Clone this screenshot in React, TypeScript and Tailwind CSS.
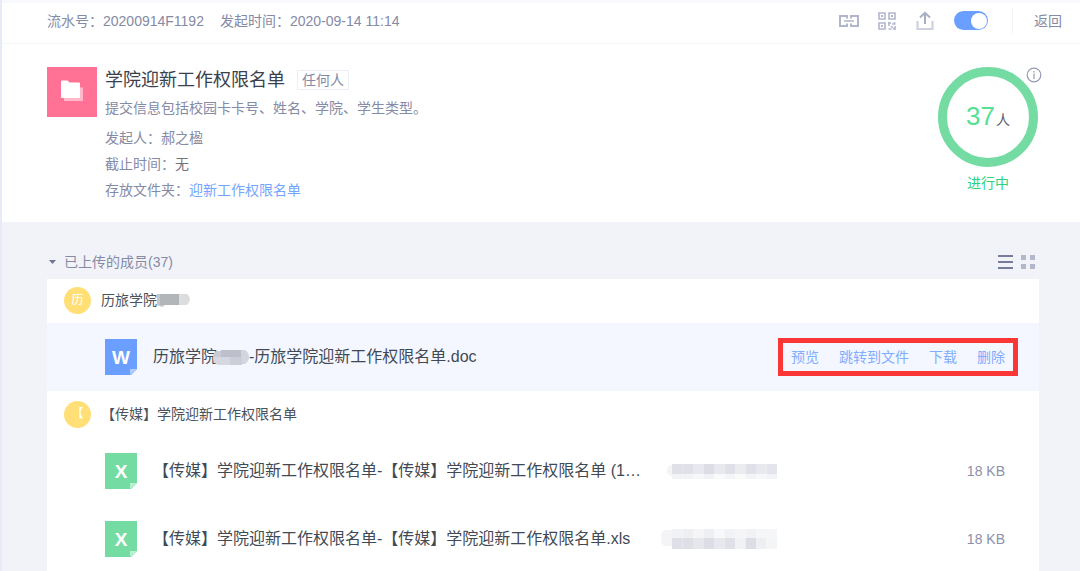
import { useState } from 'react';

type FileKind = 'word' | 'excel';

interface UploadedFile {
  kind: FileKind;
  name: string;
  size?: string;
  active?: boolean;
}

interface Member {
  initial: string;
  name: string;
  masked?: boolean;
  files: UploadedFile[];
}

const MEMBERS: Member[] = [
  {
    initial: '历',
    name: '历旅学院',
    masked: true,
    files: [{ kind: 'word', name: '-历旅学院迎新工作权限名单.doc', active: true }],
  },
  {
    initial: '【',
    name: '【传媒】学院迎新工作权限名单',
    files: [
      {
        kind: 'excel',
        name: '【传媒】学院迎新工作权限名单-【传媒】学院迎新工作权限名单 (1).xls',
        size: '18 KB',
      },
      {
        kind: 'excel',
        name: '【传媒】学院迎新工作权限名单-【传媒】学院迎新工作权限名单.xls',
        size: '18 KB',
      },
    ],
  },
];

const FILE_ACTIONS = ['预览', '跳转到文件', '下载', '删除'];

function LinkIcon() {
  return (
    <svg width="22" height="14" viewBox="0 0 22 14" fill="none" stroke="#b1b6cc" strokeWidth="2">
      <path d="M9 4.500V2H2v10h7V9.500M13 4.500V2h7v10h-7V9.500" />
      <path d="M6 7h10" strokeWidth="1.600" />
    </svg>
  );
}

function QrIcon() {
  return (
    <svg width="18" height="18" viewBox="0 0 18 18" fill="none" stroke="#b1b6cc" strokeWidth="1.6">
      <path d="M1 1h6v6H1zM11 1h6v6h-6zM1 11h6v6H1z" />
      <path d="M3 3h2v2H3zM13 3h2v2h-2zM3 13h2v2H3z" fill="#b1b6cc" stroke="none" />
      <path d="M11 10v4M10 11h3M14 12h3.500M16.500 10v2M13 14l2 2M10.500 17h3M17 14v4M15 17h2" />
    </svg>
  );
}

function ShareIcon() {
  return (
    <svg width="18" height="20" viewBox="0 0 18 20" fill="none">
      <path d="M1.500 10v8h15v-8" stroke="#ced2e0" strokeWidth="2.200" />
      <path d="M9 13V2M4 6.500L9 1.800l5 4.700" stroke="#a9aec5" strokeWidth="2" />
    </svg>
  );
}

function FolderLogo() {
  return (
    <svg className="shrink-0" width="50" height="50" viewBox="0 0 50 50">
      <path d="M0 0h50v50H0z" fill="#ff7295" />
      <path d="M17 20.500h19V34H17z" fill="#ffb9ca" />
      <path d="M14 14.500q0-1 1-1h5.500l2 2H32q1 0 1 1V30q0 1-1 1H15q-1 0-1-1z" fill="#fff" />
    </svg>
  );
}

function FileIcon({ kind }: { kind: FileKind }) {
  const word = kind === 'word';
  return (
    <svg className="shrink-0" width="32" height="36" viewBox="0 0 32 36">
      <path d="M0 0h32v30l-6 6H0z" fill={word ? '#6b9fff' : '#74dca3'} />
      <path d="M25 30h7l-7 6z" fill={word ? '#b0ccff' : '#b5f2cf'} />
      <text
        x="16"
        y="25"
        textAnchor="middle"
        fill="#fff"
        fontSize="19"
        fontWeight="700"
        fontFamily="Liberation Sans, sans-serif"
      >
        {word ? 'W' : 'X'}
      </text>
    </svg>
  );
}

function NameMask() {
  return (
    <svg className="shrink-0" width="33" height="14" viewBox="0 0 33 14">
      <path d="M0 1h11v11H8l-3 2-5-2z" fill="#c4c7c9" />
      <path d="M3 1h19v11H3z" fill="#b3b6b9" />
      <path d="M22 1h8q3 2 3 5t-3 6h-8z" fill="#dbdddf" />
    </svg>
  );
}

function FileNameMask() {
  return (
    <svg className="-ml-1 shrink-0" width="36" height="18" viewBox="0 0 36 18">
      <path d="M3 3h14v6H0q0-4 3-6z" fill="#c9ccd5" />
      <path d="M8 2h20v8H8z" fill="#bdc0ca" />
      <path d="M28 2h4q4 3 4 7t-4 7h-4z" fill="#d3d5de" />
      <path d="M0 9h18v8H5q-5-2-5-8z" fill="#d5d8e1" />
      <path d="M17 9h12v8H17z" fill="#cbced8" />
    </svg>
  );
}

const TIME_MASKS = [
  {
    top: ['#e0e1e8', '#e0e1e8', '#e8e9ee', '#dcdde5', '#e8e9ee', '#e0e1e8', '#ebecf0', '#e0e1e8', '#e8e9ee', '#e4e5ec'],
    bottom: ['#f2f3f6', '#f2f3f6', '#f7f7f9', '#f0f1f4', '#fafafb', '#f4f5f7', '#fafafb', '#f2f3f6', '#f7f7f9', '#f2f3f6'],
    topHeight: 10,
    bottomHeight: 5,
  },
  {
    top: ['#f1f2f5', '#eeeff3', '#f5f5f8', '#eeeff3', '#f7f8fa', '#f1f2f5', '#f5f5f8', '#f1f2f5', '#f5f6f8', '#f6f6f8'],
    bottom: ['#dfe0e7', '#dfe0e7', '#e6e7ec', '#dcdde5', '#e8e9ee', '#e0e1e8', '#f1f2f5', '#dcdde5', '#eeeff3', '#f4f5f7'],
    topHeight: 9,
    bottomHeight: 11,
  },
];

function TimeMask({ index }: { index: number }) {
  const mask = TIME_MASKS[index % TIME_MASKS.length];
  const height = mask.topHeight + mask.bottomHeight;
  return (
    <svg width="116" height={height} viewBox={`0 0 116 ${height}`}>
      <rect x={index ? 0 : 6} y="1" width="20" height={height - 4} rx="5" fill="#f4f4f7" />
      {mask.top.map((fill, i) => (
        <rect key={i} x={11 + i * 10.5} width="10.5" height={mask.topHeight} fill={fill} />
      ))}
      {mask.bottom.map((fill, i) => (
        <rect key={i} x={11 + i * 10.5} y={mask.topHeight} width="10.5" height={mask.bottomHeight} fill={fill} />
      ))}
    </svg>
  );
}

function FileRow({ file, index }: { file: UploadedFile; index: number }) {
  return (
    <li className={`flex h-17 items-center pr-[34px] pl-[58px] ${file.active ? 'bg-[#f4f7ff]' : ''}`}>
      <FileIcon kind={file.kind} />
      {file.active ? (
        <>
          <div className="ml-4 flex items-center text-base text-[#414a54]">
            <span>历旅学院</span>
            <FileNameMask />
            <span>{file.name}</span>
          </div>
          <div className="-mr-[13px] ml-auto flex items-center gap-5 border-[5px] border-[#fb3636] px-2 py-1 text-sm text-[#80adff]">
            {FILE_ACTIONS.map((action) => (
              <button key={action} type="button" className="leading-5">
                {action}
              </button>
            ))}
          </div>
        </>
      ) : (
        <>
          <p className="ml-4 min-w-0 flex-1 truncate text-base text-[#414a54]">{file.name}</p>
          <div className="ml-4 w-[116px] shrink-0">
            <TimeMask index={index} />
          </div>
          <span className="w-[228px] shrink-0 text-right text-sm text-[#8c90aa]">{file.size}</span>
        </>
      )}
    </li>
  );
}

export default function App() {
  const [collecting, setCollecting] = useState(true);
  const [expanded, setExpanded] = useState(true);

  return (
    <div className="min-h-screen border-l-2 border-[#e6ebf6] bg-[#f2f3f9] font-['Liberation_Sans','Noto_Sans_CJK_SC',sans-serif] text-sm text-[#858aa5]">
      {/* Top bar */}
      <header className="flex h-11 items-center border-b border-[#f5f6f9] bg-white pr-[18px] pb-0.5 pl-[45px] shadow-[inset_0_3px_0_#f7f9fc]">
        <span>流水号：20200914F1192</span>
        <span className="ml-4">发起时间：2020-09-14 11:14</span>
        <div className="ml-auto flex items-center">
          <button type="button" aria-label="复制链接">
            <LinkIcon />
          </button>
          <button type="button" aria-label="二维码" className="ml-[18px]">
            <QrIcon />
          </button>
          <button type="button" aria-label="分享" className="ml-5">
            <ShareIcon />
          </button>
          <input
            type="checkbox"
            role="switch"
            aria-label="收集状态"
            checked={collecting}
            onChange={(e) => setCollecting(e.target.checked)}
            className="ml-5 flex h-[19px] w-[34px] cursor-pointer appearance-none items-center rounded-full bg-[#c8cddb] px-px before:size-4 before:rounded-full before:bg-white checked:justify-end checked:bg-[#6b9fff]"
          />
          <span className="ml-6 h-[26px] w-px bg-[#f3f4f8]" />
          <button type="button" className="ml-[21px]">
            返回
          </button>
        </div>
      </header>

      {/* Collection summary */}
      <section className="flex items-start bg-white pt-[23px] pr-[42px] pb-[22px] pl-[45px]">
        <FolderLogo />
        <div className="ml-2 min-w-0 flex-1">
          <div className="flex h-[26px] items-center gap-3">
            <h1 className="text-lg text-[#39424c]">学院迎新工作权限名单</h1>
            <span className="border border-[#eceef7] px-1 leading-[18px]">任何人</span>
          </div>
          <p className="mt-[5px] leading-5">提交信息包括校园卡卡号、姓名、学院、学生类型。</p>
          <div className="mt-[10px] flex flex-col gap-[6px] leading-5">
            <p>发起人：郝之楹</p>
            <p>
              截止时间：<span className="text-[#70747c]">无</span>
            </p>
            <p>
              存放文件夹：
              <a href="#folder" className="text-[#74a5ff]">
                迎新工作权限名单
              </a>
            </p>
          </div>
        </div>
        <div className="relative flex flex-col items-center">
          <div className="flex size-[100px] items-center justify-center rounded-full border-[9px] border-[#74dca3]">
            <p className="flex items-baseline gap-px">
              <span className="text-[26px] text-[#55e093]">37</span>
              <span className="text-sm text-[#5a5e66]">人</span>
            </p>
          </div>
          <p className="mt-[6px] leading-5 text-[#2bd47c]">进行中</p>
          <button type="button" aria-label="说明" className="absolute top-0 -right-1">
            <svg width="16" height="16" viewBox="0 0 16 16" fill="none" stroke="#9599b5" strokeWidth="1.200">
              <circle cx="8" cy="8" r="6.800" />
              <path d="M8 6.500V12M8 4v1.500" />
            </svg>
          </button>
        </div>
      </section>

      {/* Uploaded members */}
      <main className="pt-[30px] pr-[41px] pl-[45px]">
        <div className="mb-[7px] flex h-5 items-center justify-between pr-1">
          <button type="button" onClick={() => setExpanded(!expanded)} className="flex items-center gap-[7px]">
            <svg className="ml-px" width="9" height="6" viewBox="0 0 9 6">
              <path d="M1 1h7L4.500 5z" fill="#6f7592" />
            </svg>
            已上传的成员(37)
          </button>
          <div className="flex gap-2">
            <button type="button" aria-label="列表视图">
              <svg width="15" height="14" viewBox="0 0 15 14" stroke="#777c9b" strokeWidth="2">
                <path d="M0 1h15M0 7h15M0 13h15" />
              </svg>
            </button>
            <button type="button" aria-label="网格视图">
              <svg width="14" height="14" viewBox="0 0 14 14" fill="#b3b7cb">
                <path d="M0 0h5v5H0zM9 0h5v5H9zM0 9h5v5H0zM9 9h5v5H9z" />
              </svg>
            </button>
          </div>
        </div>

        {expanded && (
          <ul className="flex flex-col gap-0.5 bg-white">
            {MEMBERS.map((member) => (
              <li key={member.name}>
                <div className="flex h-11 items-center px-[17px] pb-0.5 text-[#4a525c]">
                  <span className="flex size-[27px] items-center justify-center rounded-full bg-[#ffdf76] text-xs text-white">
                    {member.initial}
                  </span>
                  <span className="ml-[10px]">{member.name}</span>
                  {member.masked && <NameMask />}
                </div>
                <ul>
                  {member.files.map((file, i) => (
                    <FileRow key={file.name} file={file} index={i} />
                  ))}
                </ul>
              </li>
            ))}
          </ul>
        )}
      </main>
    </div>
  );
}
